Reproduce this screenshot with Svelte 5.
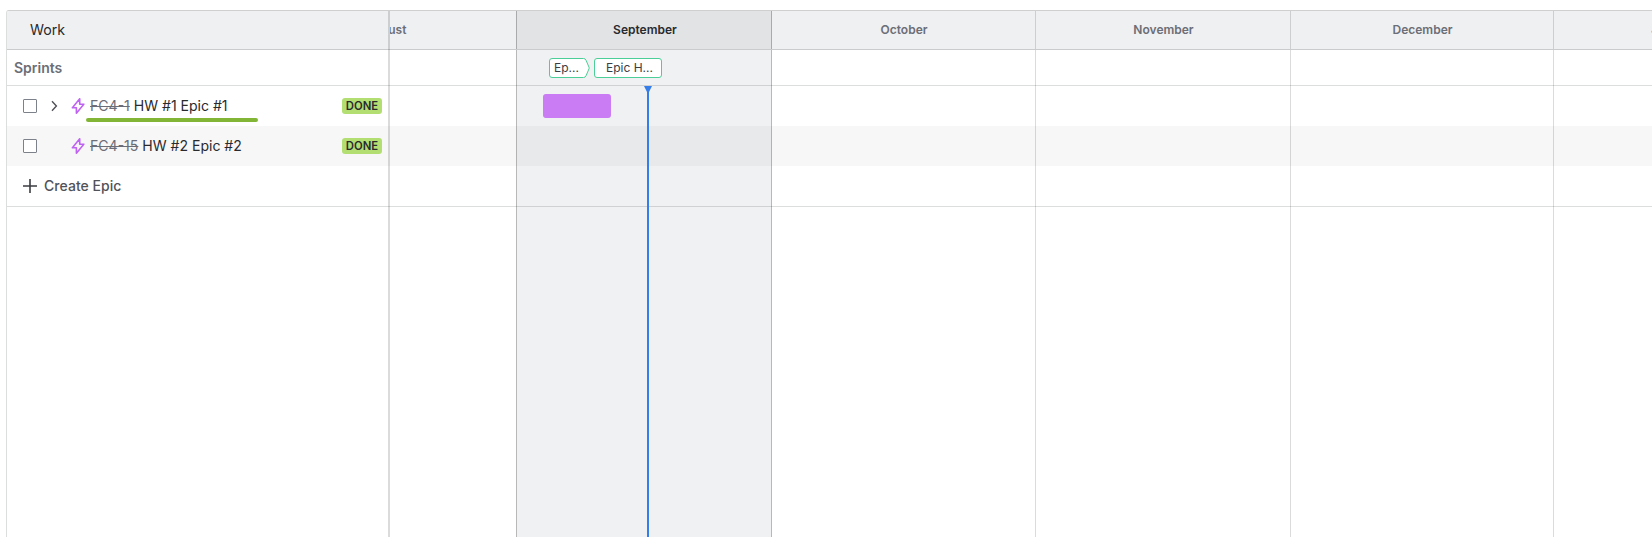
<script>
  const months = [
    { name: 'August', width: 263 },
    { name: 'September', width: 255, current: true },
    { name: 'October', width: 264 },
    { name: 'November', width: 255 },
    { name: 'December', width: 263 },
    { name: "January '23", width: 264 }
  ];
  const epics = [
    { key: 'FC4-1', title: 'HW #1 Epic #1', expandable: true, marked: true, bar: { left: 153, width: 68 } },
    { key: 'FC4-15', title: 'HW #2 Epic #2' }
  ];
</script>

<div class="roadmap">
  <section class="side">
    <header class="head work">Work</header>
    <div class="sprints label">Sprints</div>
    {#each epics as epic, i}
      <div class="row epic" class:odd={i % 2}>
        <span class="check"></span>
        <span class="toggle">
          {#if epic.expandable}
            <svg width="16" height="16" viewBox="0 0 16 16"><path d="M6 3.3 10.4 8 6 12.7" fill="none" stroke="#505258" stroke-width="1.4" /></svg>
          {/if}
        </span>
        <svg class="bolt" width="14" height="18" viewBox="0 0 14 18">
          <path d="M8.7 1.8 1.4 10.8H5.4V16.2L12.8 7.2H8.7Z" fill="none" stroke="#bf63f3" stroke-width="1.6" stroke-linejoin="round" />
        </svg>
        <span class="name"><s>{epic.key}</s> {epic.title}</span>
        <b class="done">DONE</b>
        {#if epic.marked}<i class="mark"></i>{/if}
      </div>
    {/each}
    <div class="row create">
      <svg width="14" height="14" viewBox="0 0 14 14"><path d="M7 0v14M0 7h14" stroke="#3b3d42" stroke-width="1.6" /></svg>
      <span>Create Epic</span>
    </div>
  </section>

  <section class="timeline">
    <div class="track head">
      {#each months as m}
        <div class="month" class:current={m.current} style:width="{m.width}px">{m.name}</div>
      {/each}
    </div>
    <div class="sprints"></div>
    {#each epics as epic, i}
      <div class="row" class:odd={i % 2}></div>
    {/each}
    <div class="row create"></div>

    <div class="track columns">
      {#each months as m}
        <div class="column" class:current={m.current} style:width="{m.width}px"></div>
      {/each}
    </div>

    <div class="sprint-bar first">
      <svg width="41" height="20" viewBox="0 0 41 20">
        <path d="M3 .5H34.5Q36.3 .5 37 2.2L40 9.2Q40.3 10 40 10.8L37 17.8Q36.3 19.5 34.5 19.5H3Q.5 19.5 .5 17V3Q.5 .5 3 .5Z" fill="#fff" stroke="#4bce97" />
      </svg>
      <span>Ep...</span>
    </div>
    <div class="sprint-bar second"><span>Epic H...</span></div>
    {#each epics as epic}
      {#if epic.bar}
        <div class="epic-bar" style:left="{epic.bar.left}px" style:width="{epic.bar.width}px"></div>
      {/if}
    {/each}
    <div class="today"></div>
  </section>
</div>

<style>
  :global(body) { margin: 0; background: #fff; overflow: hidden; }
  .roadmap {
    box-sizing: border-box;
    display: flex;
    width: 1646px;
    height: 527px;
    margin: 10px 0 0 6px;
    border: solid #cfcfd0;
    border-width: 1px 0 0 1px;
    border-left-color: #dcdddd;
    border-top-left-radius: 3px;
    overflow: hidden;
    font: 14px/20px Inter, sans-serif;
    color: #292a2e;
  }
  .side { width: 383px; margin-right: -2px; flex: none; position: relative; z-index: 1; }
  .side::after { content: ''; position: absolute; right: 0; top: 0; bottom: 0; width: 2px; background: rgba(0, 0, 0, .14); }
  .timeline { flex: 1; min-width: 0; margin-left: 2px; position: relative; overflow: hidden; }
  .head, .sprints, .row { box-sizing: border-box; display: flex; align-items: center; }
  .head { height: 39px; background: #eff0f2; border-bottom: 1px solid #cacbcc; }
  .sprints { height: 36px; border-bottom: 1px solid #dcdddd; }
  .row { height: 40px; position: relative; }
  .row.create { height: 41px; border-bottom: 1px solid #dcdddd; }
  .odd { background: #f7f7f7; }
  .work { padding: 0 0 0 23px; font-size: 14.2px; }
  .label { padding-left: 7px; font-weight: 600; color: #6b6e76; }
  .epic { padding: 0 8px 0 16px; }
  .check { box-sizing: border-box; width: 14px; height: 14px; border: 1px solid #7d818a; border-radius: 1px; background: #fff; }
  .toggle { width: 16px; height: 16px; margin: 0 11px 0 9px; }
  .toggle svg { display: block; }
  .bolt { margin: 0 5px 0 -2px; flex: none; }
  .name { flex: 1; white-space: nowrap; font-size: 14.05px; }
  s { color: #6b6e76; }
  .done { box-sizing: border-box; width: 40px; height: 16px; text-align: center; border-radius: 3px; background: #b3df72; font-size: 11.3px; line-height: 16px; font-weight: 600; }
  .mark { position: absolute; left: 79px; top: 32px; width: 172px; height: 4px; border-radius: 2px; background: #82b536; }
  .side .create { padding-left: 16px; gap: 7px; color: #505258; font-weight: 450; letter-spacing: .04px; }
  .track { width: 1564px; margin-left: -136px; }
  .month {
    box-sizing: border-box; flex: none; height: 38px; padding-left: 1px; border-right: 1px solid #cdcecf;
    text-align: center; font-size: 12px; line-height: 38px; font-weight: 600; color: #6b6e76;
  }
  .month.current { background: #e2e3e4; color: #292a2e; padding-left: 2px; }
  .columns { position: absolute; left: 0; top: 39px; bottom: 0; display: flex; }
  .column { box-sizing: border-box; flex: none; border-right: 1px solid rgba(0, 0, 0, .14); }
  .column.current { background: rgba(5, 21, 36, .06); background-clip: padding-box; border-right-color: rgba(0, 0, 0, .28); }
  .month:has(+ .current), .month.current { border-right-color: #a9aaab; }
  .column:has(+ .current) { border-right-color: rgba(0, 0, 0, .28); }
  .sprint-bar { position: absolute; top: 47px; height: 20px; font-size: 12px; line-height: 20px; white-space: nowrap; color: #3b3d42; }
  .sprint-bar svg { position: absolute; left: 0; top: 0; }
  .sprint-bar span { position: relative; }
  .first { left: 159px; width: 36px; padding-left: 5px; }
  .second { box-sizing: border-box; left: 204px; width: 68px; border: 1px solid #4bce97; border-radius: 3px; background: #fff; line-height: 18px; padding-left: 11px; }
  .epic-bar { position: absolute; top: 83px; height: 24px; border-radius: 3px; background: #c97cf4; }
  .today { position: absolute; left: 257px; top: 75px; bottom: 0; width: 2px; background: #357de8; }
  .today::before { content: ''; position: absolute; left: -3px; top: 0; border: solid transparent; border-width: 8px 4px 0; border-top-color: #357de8; }
</style>
